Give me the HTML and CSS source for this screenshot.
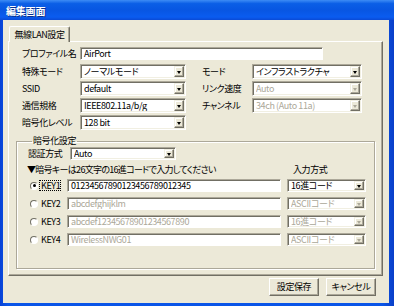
FILE: index.html
```html
<!DOCTYPE html>
<html lang="ja">
<head>
<meta charset="utf-8">
<link rel="stylesheet" href="styles.css">
</head>
<body>
<div class="window">
  <div class="titlebar"><span class="title">編集画面</span></div>
  <div class="client">
    <div class="tabs"><div class="tab">無線LAN設定</div></div>
    <div class="panel">
      <div class="profile">
        <span class="label">プロファイル名</span>
        <div class="field profile-field"><span class="lat">AirPort</span></div>
      </div>
      <div class="grid">
        <span class="label">特殊モード</span>
        <div class="select"><span class="val">ノーマルモード</span><span class="drop"></span></div>
        <span class="label">モード</span>
        <div class="select"><span class="val">インフラストラクチャ</span><span class="drop"></span></div>

        <span class="label lat">SSID</span>
        <div class="select"><span class="val lat">default</span><span class="drop"></span></div>
        <span class="label">リンク速度</span>
        <div class="select disabled"><span class="val lat">Auto</span><span class="drop"></span></div>

        <span class="label">通信規格</span>
        <div class="select"><span class="val lat">IEEE802.11a/b/g</span><span class="drop"></span></div>
        <span class="label">チャンネル</span>
        <div class="select disabled"><span class="val lat">34ch (Auto 11a)</span><span class="drop"></span></div>

        <span class="label">暗号化レベル</span>
        <div class="select"><span class="val lat">128 bit</span><span class="drop"></span></div>
      </div>

      <fieldset class="group">
        <legend class="legend">暗号化設定</legend>
        <div class="auth">
          <span class="label auth-label">認証方式</span>
          <div class="select auth-select"><span class="val lat">Auto</span><span class="drop"></span></div>
        </div>
        <div class="hint">
          <span class="hint-text">▼暗号キーは26文字の16進コードで入力してください</span>
          <span class="hint-mode">入力方式</span>
        </div>
        <div class="keys">
          <div class="key">
            <span class="radio checked"></span><span class="keyname focus lat">KEY1</span>
            <div class="field keyfield"><span class="lat">01234567890123456789012345</span></div>
            <div class="select keysel"><span class="val">16進コード</span><span class="drop"></span></div>
          </div>
          <div class="key">
            <span class="radio"></span><span class="keyname lat">KEY2</span>
            <div class="field keyfield disabled"><span class="lat">abcdefghijklm</span></div>
            <div class="select keysel disabled"><span class="val">ASCIIコード</span><span class="drop"></span></div>
          </div>
          <div class="key">
            <span class="radio"></span><span class="keyname lat">KEY3</span>
            <div class="field keyfield disabled"><span class="lat">abcdef12345678901234567890</span></div>
            <div class="select keysel disabled"><span class="val">16進コード</span><span class="drop"></span></div>
          </div>
          <div class="key">
            <span class="radio"></span><span class="keyname lat">KEY4</span>
            <div class="field keyfield disabled"><span class="lat">WirelessNWG01</span></div>
            <div class="select keysel disabled"><span class="val">ASCIIコード</span><span class="drop"></span></div>
          </div>
        </div>
      </fieldset>
    </div>
    <div class="buttons">
      <button class="btn" type="button">設定保存</button>
      <button class="btn" type="button">キャンセル</button>
    </div>
  </div>
</div>
</body>
</html>
```

FILE: styles.css
```css
* { box-sizing: border-box; }
html, body { margin: 0; padding: 0; }
body {
  font-family: "Noto Sans CJK JP", "Noto Sans", sans-serif;
  font-size: 9px;
  line-height: 11px;
  color: #000;
  font-feature-settings: "palt";
  letter-spacing: -0.4px;
  background: #fff;
}
.window {
  width: 394px;
  height: 306px;
  display: flex;
  flex-direction: column;
  background: linear-gradient(to right, #0842d6 0%, #0a55e8 2%, #0a55e8 97%, #0a3fc8 100%);
}
.titlebar {
  height: 20px;
  flex: none;
  display: flex;
  align-items: center;
  padding-left: 6px;
  background: linear-gradient(to bottom, #3d8cf5 0%, #0b5fe6 18%, #0856e2 50%, #0a5cf0 85%, #0a4ad6 100%);
}
.title {
  color: #fff;
  font-weight: bold;
  font-size: 10px;
  letter-spacing: -0.2px;
  text-shadow: 1px 1px 0 #0a2f8c;
}
.client {
  flex: 1;
  margin: 0 5px 3px 3px;
  background: #ece9d8;
  display: flex;
  flex-direction: column;
  padding: 6px 0 0 5px;
}
.tabs {
  display: flex;
  padding-left: 1px;
  height: 15px;
}
.tab {
  position: relative;
  z-index: 1;
  width: 61px;
  height: 16px;
  background: #ece9d8;
  border-left: 1px solid #fff;
  border-top: 1px solid #fff;
  border-right: 1px solid #716f64;
  box-shadow: inset -1px 0 #aca899;
  border-radius: 2px 2px 0 0;
  text-align: center;
  line-height: 13px;
  padding-top: 1px;
}
.panel {
  width: 375px;
  height: 235px;
  border-left: 1px solid #fff;
  border-top: 1px solid #fff;
  border-right: 1px solid #716f64;
  border-bottom: 1px solid #716f64;
  box-shadow: inset -1px -1px #aca899;
  padding: 5px 0 0 13px;
}
.label { white-space: nowrap; }
.lat { letter-spacing: -0.4px; }
.profile {
  display: flex;
  align-items: center;
  height: 13px;
}
.profile .label { width: 58px; }
.field {
  background: #fff;
  border: 1px solid;
  border-color: #aca899 #fff #fff #aca899;
  box-shadow: inset 1px 1px #716f64;
  padding: 0 0 0 3px;
  display: flex;
  align-items: center;
  white-space: nowrap;
  overflow: hidden;
}
.profile-field { width: 243px; height: 13px; }
.grid {
  margin-top: 4px;
  display: grid;
  grid-template-columns: 58px 106px 16px 50px 110px;
  grid-auto-rows: 15px;
  row-gap: 2px;
  align-items: center;
}
.grid > :nth-child(4n+3) { grid-column: 4; }
.select {
  height: 15px;
  background: #fff;
  border: 1px solid;
  border-color: #aca899 #fff #fff #aca899;
  box-shadow: inset 1px 1px #716f64, inset -1px -1px #f1efe2;
  display: flex;
  align-items: center;
  padding: 1px 1px 1px 3px;
  white-space: nowrap;
  overflow: hidden;
}
.val { flex: 1; overflow: hidden; }
.drop {
  flex: none;
  width: 10px;
  height: 11px;
  background: #ece9d8;
  border: 1px solid;
  border-color: #f1efe2 #716f64 #716f64 #f1efe2;
  box-shadow: inset -1px -1px #aca899, inset 1px 1px #fff;
  display: flex;
  align-items: center;
  justify-content: center;
}
.drop::after {
  content: "";
  width: 0;
  height: 0;
  border-left: 2.5px solid transparent;
  border-right: 2.5px solid transparent;
  border-top: 3px solid #000;
  margin-top: 1px;
}
.disabled { color: #aca899; }
.disabled .drop::after { border-top-color: #aca899; }

.group {
  margin: 6px 0 0 -6px;
  width: 359px;
  height: 133px;
  padding: 0 0 0 11px;
  border: 1px solid #aca899;
  box-shadow: inset 1px 1px #fff, 1px 1px #fff;
  min-inline-size: 0;
}
.legend {
  padding: 0 1px;
  margin-left: 4px;
  line-height: 10px;
}
.auth {
  display: flex;
  align-items: center;
  height: 13px;
  margin-top: 1px;
}
.auth-label { width: 42px; }
.auth-select { width: 106px; height: 13px; padding-top: 0; padding-bottom: 0; }
.auth-select .drop { height: 9px; }
.hint {
  display: flex;
  align-items: center;
  height: 11px;
  margin-top: 4px;
  margin-left: -1px;
}
.hint-text { width: 266px; white-space: nowrap; letter-spacing: -0.7px; }
.keys {
  margin-top: 4px;
  display: flex;
  flex-direction: column;
  gap: 5px;
}
.key {
  display: flex;
  align-items: center;
  height: 13px;
}
.radio {
  flex: none;
  width: 8px;
  height: 8px;
  border-radius: 50%;
  background: #fff;
  border: 1px solid;
  border-color: #716f64 #fff #fff #716f64;
  margin-left: 2px;
  display: flex;
  align-items: center;
  justify-content: center;
}
.radio.checked::after {
  content: "";
  width: 3px;
  height: 3px;
  border-radius: 50%;
  background: #000;
}
.keyname {
  width: 28px;
  padding-left: 2px;
  margin-left: 1px;
  font-size: 9px;
}
.focus { outline: 1px dotted #000; outline-offset: -1px; width: 22px; margin-right: 6px; }
.keyfield { width: 214px; height: 13px; }
.keysel { width: 79px; height: 13px; margin-left: 6px; padding-top: 0; padding-bottom: 0; }
.keysel .drop { height: 9px; }

.buttons {
  display: flex;
  justify-content: flex-end;
  gap: 7px;
  padding: 2px 13px 0 0;
}
.btn {
  font: inherit;
  font-feature-settings: "palt";
  letter-spacing: -0.4px;
  width: 50px;
  height: 18px;
  padding: 0;
  background: #ece9d8;
  border: 1px solid;
  border-color: #fff #716f64 #716f64 #fff;
  box-shadow: inset -1px -1px #aca899;
  color: #000;
  line-height: 14px;
}
```
